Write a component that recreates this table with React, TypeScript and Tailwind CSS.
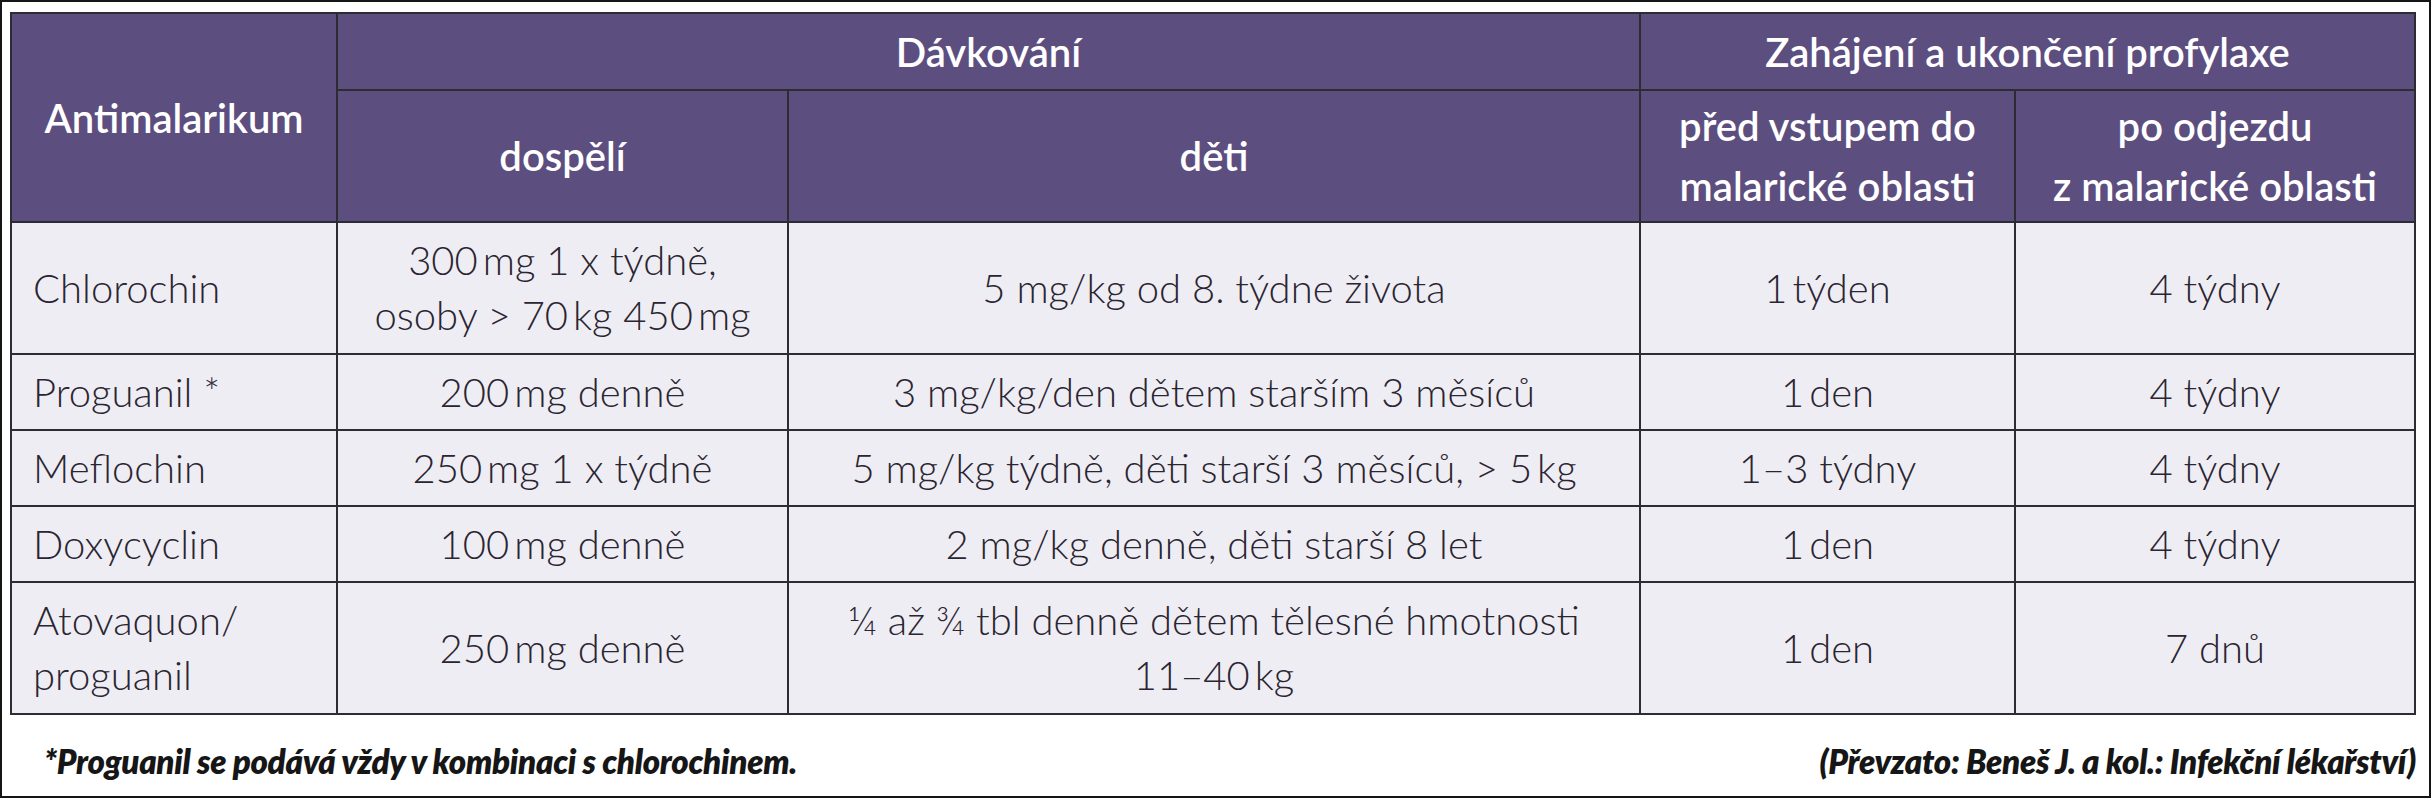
const rows = [
  { name: ['Chlorochin'], adult: ['300\u2009mg 1 x týdně,', 'osoby > 70\u2009kg 450\u2009mg'], child: ['5 mg/kg od 8. týdne života'], before: '1\u2009týden', after: '4 týdny', tall: true },
  { name: ['Proguanil *'], adult: ['200\u2009mg denně'], child: ['3 mg/kg/den dětem starším 3 měsíců'], before: '1\u2009den', after: '4 týdny' },
  { name: ['Meflochin'], adult: ['250\u2009mg 1 x týdně'], child: ['5 mg/kg týdně, děti starší 3 měsíců, > 5\u2009kg'], before: '1–3 týdny', after: '4 týdny' },
  { name: ['Doxycyclin'], adult: ['100\u2009mg denně'], child: ['2 mg/kg denně, děti starší 8 let'], before: '1\u2009den', after: '4 týdny' },
  { name: ['Atovaquon/', 'proguanil'], adult: ['250\u2009mg denně'], child: ['¼ až ¾ tbl denně dětem tělesné hmotnosti', '11–40\u2009kg'], before: '1\u2009den', after: '7 dnů', tall: true },
];

function Lines({ lines }: { lines: string[] }) {
  return (
    <div>
      {lines.map((l, i) => (
        <div key={i}>{l}</div>
      ))}
    </div>
  );
}

export default function App() {
  const head = 'bg-[#5d4e80] text-white font-semibold text-[40px] leading-[60px] flex items-center justify-center text-center';
  const cell = 'bg-[#efedf4] text-[#2a2530] font-light text-[40px] leading-[55px] flex items-center justify-center text-center';

  return (
    <div className="bg-white w-[2435px] h-[800px] font-[family-name:Lato,'Liberation_Sans',sans-serif]">
      <div className="w-[2431px] h-[798px] border-2 border-[#151515] pl-[8px] pt-[10px]">
        {/* table */}
        <div className="grid w-[2406px] grid-cols-[324px_449px_850px_373px_398px] grid-rows-[75px_130px_130px_74px_74px_74px_130px] gap-[2px] p-[2px] bg-[#2e2c33]">
          <div className={`${head} row-span-2`}>Antimalarikum</div>
          <div className={`${head} col-span-2`}>Dávkování</div>
          <div className={`${head} col-span-2`}>Zahájení a ukončení profylaxe</div>
          <div className={head}>dospělí</div>
          <div className={head}>děti</div>
          <div className={head}>
            <Lines lines={['před vstupem do', 'malarické oblasti']} />
          </div>
          <div className={head}>
            <Lines lines={['po odjezdu', 'z malarické oblasti']} />
          </div>

          {rows.map((r) => (
            <div key={r.name[0]} className="contents">
              <div className={`${cell} justify-start! text-left! pl-[21px]`}>
                <Lines lines={r.name} />
              </div>
              <div className={cell}>
                <Lines lines={r.adult} />
              </div>
              <div className={cell}>
                <Lines lines={r.child} />
              </div>
              <div className={cell}>{r.before}</div>
              <div className={cell}>{r.after}</div>
            </div>
          ))}
        </div>

        {/* footnote */}
        <div className="w-[2406px] h-[80px] pt-[14px] flex items-center justify-between pl-[34px] text-[33px] font-extrabold italic tracking-[-0.3px] text-[#161616]">
          <span>*Proguanil se podává vždy v kombinaci s chlorochinem.</span>
          <span>(Převzato: Beneš J. a kol.: Infekční lékařství)</span>
        </div>
      </div>
    </div>
  );
}
